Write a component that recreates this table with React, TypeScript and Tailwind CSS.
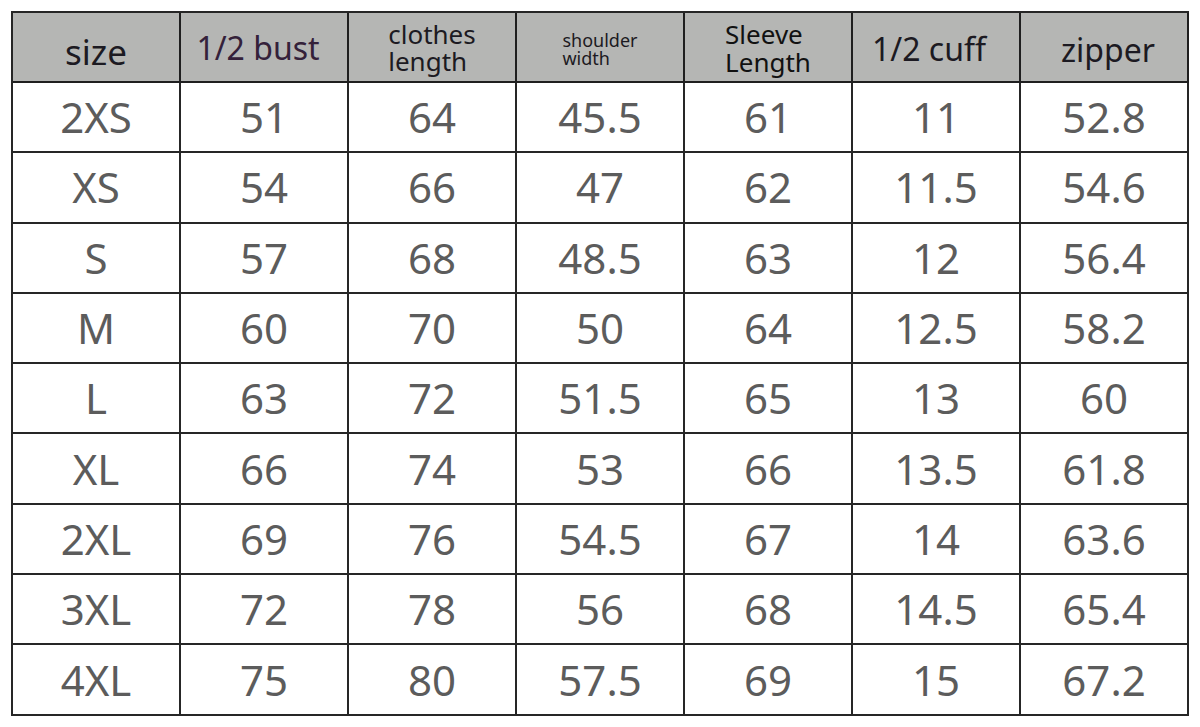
const HEAD = [
  { lines: ["size"], cls: "pt-[8px] text-[35px] text-[#1c1a22]" },
  { lines: ["1/2 bust"], cls: "pr-[12px] pt-[2px] text-[32px] text-[#34213a]" },
  { lines: ["clothes", "length"], cls: "pt-[2px] text-[26px] leading-[27px] text-[#1c1a22]" },
  { lines: ["shoulder", "width"], cls: "pt-[4px] text-[18px] leading-[18px] text-[#1c1a22]" },
  { lines: ["Sleeve", "Length"], cls: "pt-[2px] text-[26px] leading-[28px] text-[#111111]" },
  { lines: ["1/2 cuff"], cls: "pr-[14px] pt-[4px] text-[32px] text-[#1c1a22]" },
  { lines: ["zipper"], cls: "pl-[8px] pt-[6px] text-[32px] text-[#1c1a22]" },
];

const ROWS = [
  ["2XS", "51", "64", "45.5", "61", "11", "52.8"],
  ["XS", "54", "66", "47", "62", "11.5", "54.6"],
  ["S", "57", "68", "48.5", "63", "12", "56.4"],
  ["M", "60", "70", "50", "64", "12.5", "58.2"],
  ["L", "63", "72", "51.5", "65", "13", "60"],
  ["XL", "66", "74", "53", "66", "13.5", "61.8"],
  ["2XL", "69", "76", "54.5", "67", "14", "63.6"],
  ["3XL", "72", "78", "56", "68", "14.5", "65.4"],
  ["4XL", "75", "80", "57.5", "69", "15", "67.2"],
];

export default function App() {
  return (
    <div className="h-[727px] w-[1200px] bg-white pl-[11px] pt-[11px] font-['Noto_Sans',sans-serif]">
      <div className="grid w-[1178px] grid-cols-[repeat(7,168px)] border-l-2 border-t-2 border-[#262626]">
        {/* header */}
        {HEAD.map((h, i) => (
          <div
            key={i}
            className="flex h-[70px] items-center justify-center border-b-2 border-r-2 border-[#1f1f1f] bg-[#b5b6b4]"
          >
            <p className={`text-left ${h.cls} ${h.lines.length === 1 ? "leading-none" : ""}`}>
              {h.lines[0]}
              {h.lines[1] && (
                <>
                  <br />
                  {h.lines[1]}
                </>
              )}
            </p>
          </div>
        ))}

        {/* body */}
        {ROWS.map((r) =>
          r.map((v, j) => (
            <div
              key={r[0] + j}
              className="flex h-[70.3px] items-center justify-center border-b-2 border-r-2 border-[#262626] text-[42px] leading-none text-[#5c5c5c]"
            >
              {v}
            </div>
          ))
        )}
      </div>
    </div>
  );
}
